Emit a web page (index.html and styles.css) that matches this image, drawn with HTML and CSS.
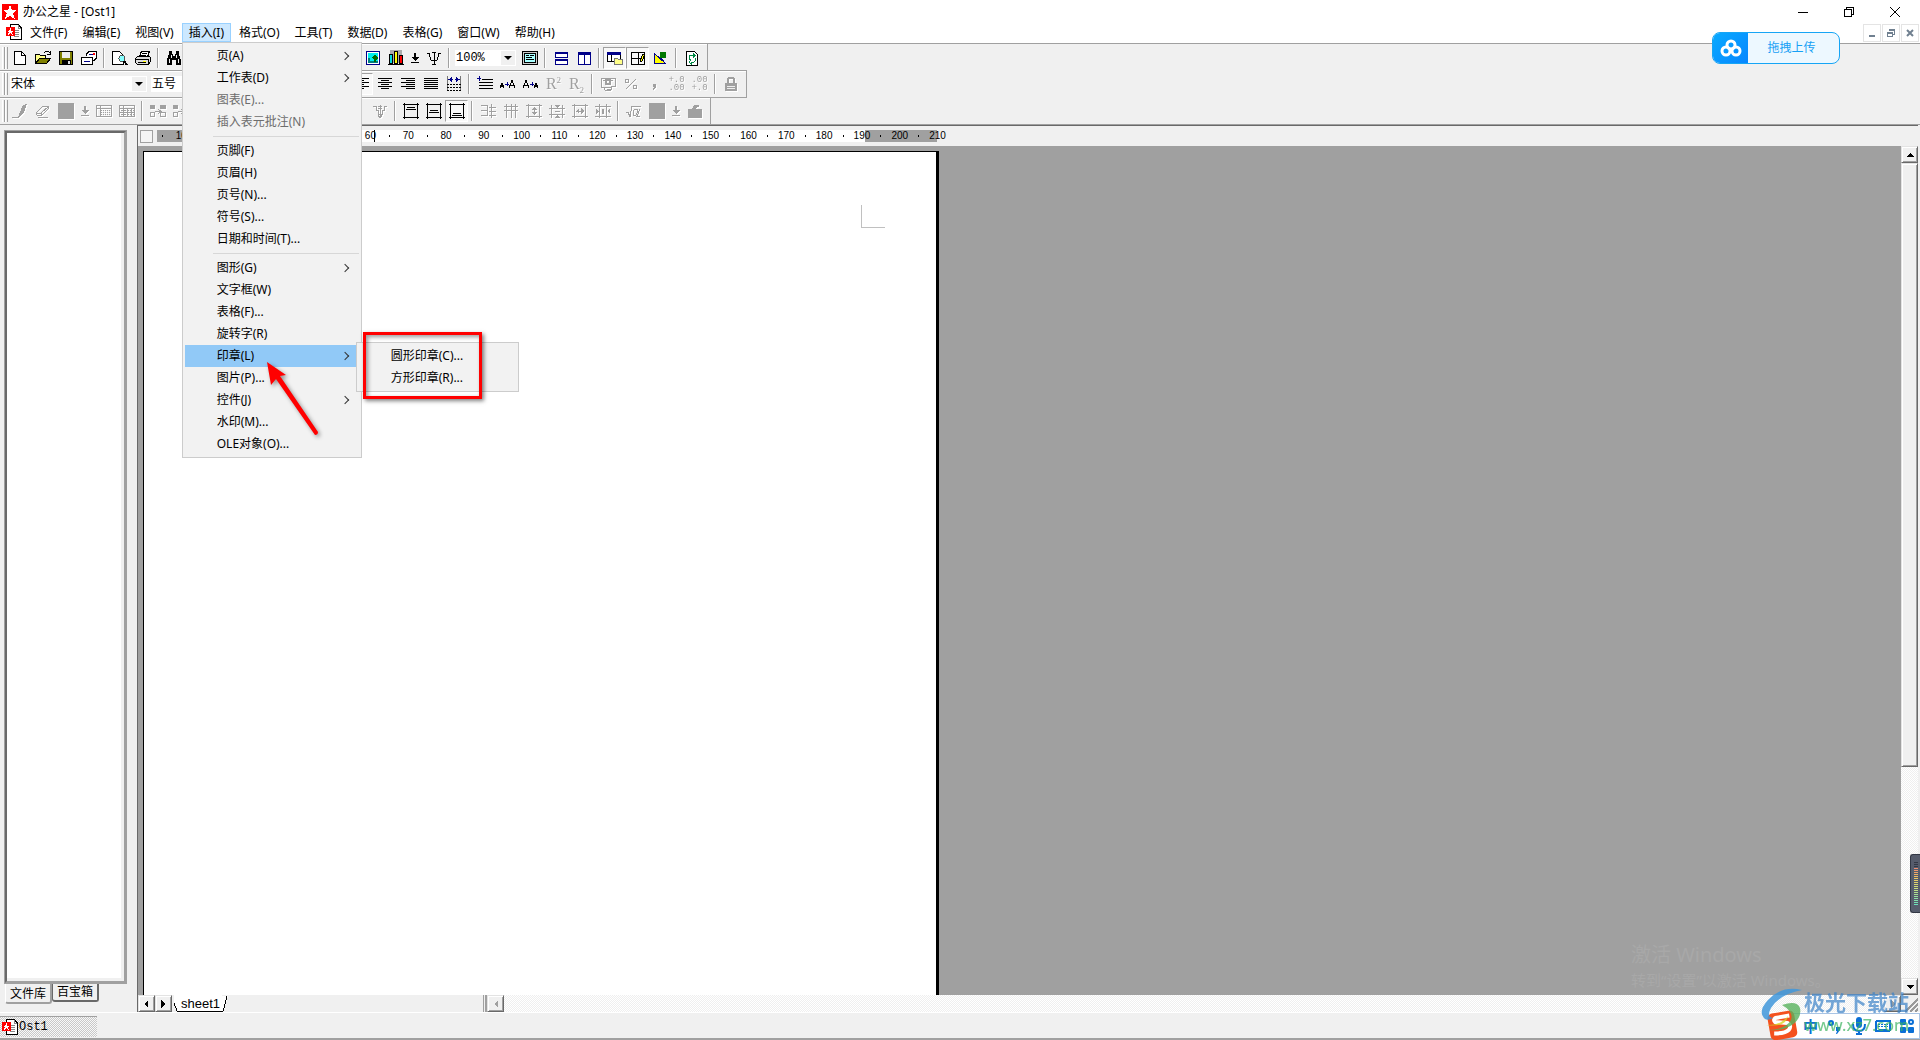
FILE: index.html
```html
<!DOCTYPE html>
<html lang="zh-CN">
<head>
<meta charset="utf-8">
<title>办公之星 - [Ost1]</title>
<link rel="stylesheet" href="styles.css">
</head>
<body>
<svg class="sprite" aria-hidden="true">
  <symbol id="star" viewBox="0 0 16 16"><rect width="16" height="16" rx="1" fill="#f00"/><path fill="#fff" d="M8 1l2 5h5l-4 3 2 6-5-3-5 3 2-6-4-3h5z"/></symbol>
  <symbol id="doc" viewBox="0 0 16 16"><path d="M4 .5h8l3 3v12H4z" fill="#fff" stroke="#000"/><path d="M12 1v3h3M8 6h5M8 8h5M8 10h5M8 12h5" stroke="#888" fill="none"/><rect y="3" width="9" height="9" fill="#f00"/><path fill="#fff" d="M4.500 4l1 2.500h3L6 8l1 3-2.500-2L2 11l1-3L.5 6.500h3z"/></symbol>
  <symbol id="new" viewBox="0 0 16 16"><path d="M2.500 1.500h7l4 4v9h-11z" fill="#fff" stroke="#000"/><path d="M9.500 1.500v4h4" fill="none" stroke="#000"/></symbol>
  <symbol id="open" viewBox="0 0 16 16"><path d="M.5 13.500v-9h4l1 1h5v3" fill="#ff8" stroke="#000"/><path d="M.5 13.500l4-5h11l-4 5z" fill="#808000" stroke="#000"/><path d="M9 3l2-2h2l2 2M15 1v3h-3" fill="none" stroke="#000"/></symbol>
  <symbol id="save" viewBox="0 0 16 16"><path d="M1.500 1.500h13v13h-13z" fill="#808000" stroke="#000"/><path d="M4 2h8v6H4z" fill="#eee"/><path d="M4 10h9v5H4z" fill="#000"/><path d="M10 11h2v3h-2z" fill="#ddd"/></symbol>
  <symbol id="mail" viewBox="0 0 16 16"><path d="M5.500 6V4l3-3h7v7l-3 3" fill="#fff" stroke="#000"/><path d="M.5 7.500h11v7H.5z" fill="#fff" stroke="#000"/><path d="M8 4h5M3 11h6" stroke="#008"/><path d="M12 3h2v2h-2z" fill="#f00"/></symbol>
  <symbol id="preview" viewBox="0 0 16 16"><path d="M.5 1.500h7l4 4v9H.5z" fill="#fff" stroke="#000"/><circle cx="10" cy="8.500" r="3" fill="#8ff" stroke="#555"/><path d="M12 11l3 4" stroke="#000" stroke-width="2"/></symbol>
  <symbol id="print" viewBox="0 0 16 16"><path d="M4.500 7l2-6h8l-2 6" fill="#fff" stroke="#000"/><path d="M7 3h5M6 5h5" stroke="#000"/><path d="M.5 8.500l2-2h12l1 1v4l-2 3h-11l-2-2z" fill="#ddd" stroke="#000"/><path d="M1 9.500h12v4M3 12h8" stroke="#000" fill="none"/><path d="M8 11h3v1H8z" fill="#ff0"/></symbol>
  <symbol id="find" viewBox="0 0 16 16"><path d="M3 1h3v3h1v2h2V4h1V1h3v3l2 6v5h-5v-5H6v5H1v-5l2-6z" fill="#000"/><path d="M3 9v4M12 9v4M5 5v3M10 5v3" stroke="#eee"/></symbol>
  <symbol id="picture" viewBox="0 0 16 16"><path d="M1.500 1.500h13v13h-13z" fill="#fff" stroke="#008"/><path d="M3 3h10v10H3z" fill="#0ee"/><path d="M3 8h2v3h8v2H3z" fill="#008080"/><path d="M10 4l3 4-2 2v2h-2v-2L7 8z" fill="#060"/></symbol>
  <symbol id="chart" viewBox="0 0 16 16"><path d="M2 0h12v13H2z" fill="#aaa"/><path d="M1.500 4.500h3v9h-3z" fill="#0dd" stroke="#000"/><path d="M6.500 1.500h3v12h-3z" fill="#ff0" stroke="#000"/><path d="M11.500 5.500h3v8h-3z" fill="#f00" stroke="#000"/><path d="M0 14.500h16" stroke="#000"/></symbol>
  <symbol id="drop" viewBox="0 0 8 16"><path d="M3 3h2v4h3L4 11 0 7h3zM0 12h8v1H0z" fill="currentColor"/></symbol>
  <symbol id="psi" viewBox="0 0 16 16"><path d="M2 3q2 0 2 4t4 4 4-4 2-4M8 2v13M6 14.500h4M6 2.500h4M1 3.500h2M13 3.500h2" fill="none" stroke="#000"/></symbol>
  <symbol id="screen" viewBox="0 0 16 16"><path d="M.5 1.500h15v13H.5z" fill="#ccc" stroke="#000"/><path d="M2.500 3.500h11v9h-11z" fill="#aff" stroke="#000"/><path d="M4 5.500h3M8 5.500h4M4 7.500h6M4 9.500h8" stroke="#000"/></symbol>
  <symbol id="splith" viewBox="0 0 16 16"><path d="M2.500 2.500h12v5h-12zM2.500 9.500h12v5h-12z" fill="#fff" stroke="#008"/><path d="M2 2h13v2H2zM2 9h13v2H2z" fill="#008"/></symbol>
  <symbol id="splitv" viewBox="0 0 16 16"><path d="M2.500 2.500h6v12h-6zM8.500 2.500h6v12h-6z" fill="#fff" stroke="#008"/><path d="M2 2h13v3H2z" fill="#008"/></symbol>
  <symbol id="panel" viewBox="0 0 16 16"><path d="M.5 2.500h13v9H.5z" fill="#fff" stroke="#000"/><path d="M0 2h14v3H0z" fill="#008"/><path d="M4 5v7" stroke="#000"/><path d="M7.500 14.500v-6h3l1 1h4v5z" fill="#ff8" stroke="#777"/></symbol>
  <symbol id="grid" viewBox="0 0 16 16"><path d="M1.500 2.500h13v12h-13zM8 2v13M1 8.500h13" fill="none" stroke="#000"/><path d="M10 11l3-7h2l-3 7-2 1z" fill="#ff0" stroke="#000"/></symbol>
  <symbol id="shapes" viewBox="0 0 16 16"><path d="M1.500 3.500v10h11z" fill="#ff0" stroke="#008"/><circle cx="10" cy="5" r="3.500" fill="#070"/><path d="M8 8l3 4" stroke="#008"/></symbol>
  <symbol id="refresh" viewBox="0 0 16 16"><path d="M2.500 1.500h8l3 3v11h-11z" fill="#fff" stroke="#000"/><path d="M6 5l-1 1v3h2M5 5.500h4v-2l2 2-2 2M11 8v3l-1 1H7v2l-2-2 2-2" stroke="#084" fill="none"/></symbol>
  <symbol id="left" viewBox="0 0 16 16"><path d="M1 2.500h14M1 4.500h9M1 6.500h14M1 8.500h9M1 10.500h14M1 12.500h9" stroke="#000"/></symbol>
  <symbol id="center" viewBox="0 0 16 16"><path d="M1 2.500h14M4 4.500h8M1 6.500h14M4 8.500h8M1 10.500h14M4 12.500h8" stroke="#000"/></symbol>
  <symbol id="right" viewBox="0 0 16 16"><path d="M1 2.500h14M6 4.500h9M1 6.500h14M6 8.500h9M1 10.500h14M6 12.500h9" stroke="#000"/></symbol>
  <symbol id="justify" viewBox="0 0 16 16"><path d="M1 2.500h14M1 4.500h14M1 6.500h14M1 8.500h14M1 10.500h14M1 12.500h14" stroke="#000"/></symbol>
  <symbol id="spread" viewBox="0 0 16 16"><path d="M1.500 0v15M14.500 0v15" stroke="#777"/><path d="M2 3.500h5M9 3.500h5" stroke="#008"/><path d="M3 3.500l3-3v6zM13 3.500l-3-3v6z" fill="#008"/><path d="M1 8.500h14M1 11.500h14M1 14.500h14" stroke="#000" stroke-dasharray="2 1"/></symbol>
  <symbol id="indent" viewBox="0 0 16 16"><path d="M0 2.500h4M2.500 0v5" stroke="#008"/><path d="M5 3.500h11M2 6.500h14M2 9.500h14M2 12.500h14" stroke="#000" stroke-width="1.500"/></symbol>
  <symbol id="grow" viewBox="0 0 16 16"><path d="M0 12l2-5 2 5M1 10.500h3M9 12l3-8 3 8M10 9.500h4" stroke="#000" fill="none"/><path d="M5 8l4 0M7 6v4" stroke="#008"/></symbol>
  <symbol id="shrink" viewBox="0 0 16 16"><path d="M0 12l3-8 3 8M1 9.500h4M11 12l2-5 2 5M11 10.500h4" stroke="#000" fill="none"/><path d="M7 8h4M9 6v4" stroke="#008"/></symbol>
  <symbol id="money" viewBox="0 0 16 16"><path d="M1 2h14v8h-3l-1 4H5l-1-3H1z" fill="none" stroke="currentColor"/><circle cx="8" cy="6" r="2.500" fill="none" stroke="currentColor" stroke-width="2"/><path d="M3 4h2M11 4h2M5 11h6M7 13h4" stroke="currentColor"/></symbol>
  <symbol id="percent" viewBox="0 0 16 16"><circle cx="4" cy="5" r="2" fill="none" stroke="currentColor"/><circle cx="12" cy="11" r="2" fill="none" stroke="currentColor"/><path d="M13 3L3 13" stroke="currentColor"/></symbol>
  <symbol id="comma" viewBox="0 0 16 16"><path d="M7 8h3v3l-2 3H7l1-3H7z" fill="currentColor"/></symbol>
  <symbol id="lock" viewBox="0 0 16 16"><path d="M2 7h12v8H2z" fill="currentColor"/><path d="M5 7V3l1-1h4l1 1v4" fill="none" stroke="currentColor" stroke-width="2"/><path d="M4 10h8M4 12h8" stroke="#eee"/></symbol>
  <symbol id="pen" viewBox="0 0 16 16"><path d="M0 14.500h6l2-2" stroke="currentColor" fill="none"/><path d="M7 11l4-9 4-1-3 9-4 3z" fill="currentColor"/></symbol>
  <symbol id="eraser" viewBox="0 0 16 16"><path d="M1 10l7-7h5l1 2-7 7H2zM1 10h5l7-6M6 10v2M3 14.500h10" fill="none" stroke="currentColor"/></symbol>
  <symbol id="block" viewBox="0 0 16 16"><path d="M0 0h16v16H0z" fill="currentColor"/></symbol>
  <symbol id="table" viewBox="0 0 16 16"><path d="M.5 2.500h15v11H.5zM.5 5.500h15M4.500 2.500v11" fill="none" stroke="currentColor"/><path d="M5 7.500h10M5 9.500h10M5 11.500h10" stroke="currentColor" stroke-dasharray="1 1"/></symbol>
  <symbol id="tabledots" viewBox="0 0 16 16"><path d="M.5 2.500h15v11H.5zM.5 5.500h15M4.500 2.500v11M8.500 6v7M12.500 6v7M1 9.500h15" fill="none" stroke="currentColor"/><path d="M2 7.500h13M2 11.500h13" stroke="currentColor" stroke-dasharray="2 1"/></symbol>
  <symbol id="merge" viewBox="0 0 16 16"><path d="M0 2h5v4H0zM10 2h6v4h-6z" fill="currentColor"/><path d="M5 8.500h5M8 6l3 2.500L8 11M.5 9.500h4v4h-4zM10.500 9.500h5v4h-5z" fill="none" stroke="currentColor"/></symbol>
  <symbol id="funnel" viewBox="0 0 16 16"><path d="M1 3h3v4h2v4h4V7h2V3h3M8 2v12M6 12l2 3 2-3M6 3h4M6 5h4" fill="none" stroke="currentColor"/></symbol>
  <symbol id="top" viewBox="0 0 16 16"><path d="M0 1.500h16M0 14.500h16M1.500 0v16M14.500 0v16M4 4.500h8M3 6.500h10" stroke="#000"/></symbol>
  <symbol id="mid" viewBox="0 0 16 16"><path d="M0 1.500h16M0 14.500h16M1.500 0v16M14.500 0v16M4 7.500h8M3 9.500h10" stroke="#000"/></symbol>
  <symbol id="bot" viewBox="0 0 16 16"><path d="M0 1.500h16M0 14.500h16M1.500 0v16M14.500 0v16M4 10.500h8M3 12.500h10" stroke="#000"/></symbol>
  <symbol id="rows" viewBox="0 0 16 16"><path d="M1 2.500h6M1 7.500h6M1 12.500h6M7 2v11M11.500 1v14M9 4.500h7M9 8.500h7M9 12.500h7" stroke="currentColor"/></symbol>
  <symbol id="cols" viewBox="0 0 16 16"><path d="M1 3.500h14M1 7.500h14M3.500 1v14M8.500 1v14M12.500 1v14" stroke="currentColor"/></symbol>
  <symbol id="fitv" viewBox="0 0 16 16"><path d="M0 2.500h16M0 13.500h16M2.500 1v14M13.500 1v14M8 5v6" stroke="currentColor"/><path d="M5 7l3-3 3 3zM5 9l3 3 3-3z" fill="currentColor"/></symbol>
  <symbol id="fitout" viewBox="0 0 16 16"><path d="M0 5.500h16M0 11.500h16M2.500 2v13M13.500 2v13" stroke="currentColor"/><path d="M6 2h5L8 5zM6 15h5l-3-3zM6 8h5v1H6z" fill="currentColor"/></symbol>
  <symbol id="fith" viewBox="0 0 16 16"><path d="M0 2.500h16M0 13.500h16M2.500 1v14M13.500 1v14M4 8h8" stroke="currentColor"/><path d="M7 5v6L4 8zM9 5v6l3-3z" fill="currentColor"/></symbol>
  <symbol id="fitin" viewBox="0 0 16 16"><path d="M0 3.500h16M0 13.500h16M4.500 1v14M11.500 1v14" stroke="currentColor"/><path d="M1 6v5l3-3zM15 6v5l-3-3zM7 6h2v5H7z" fill="currentColor"/></symbol>
  <symbol id="root" viewBox="0 0 16 16"><path d="M0 9h2l2 5 2-11h9M14 6l-3 7h3M12 6H9q-2 1-2 4t2 3q2 0 3-7" fill="none" stroke="currentColor"/></symbol>
  <symbol id="folder" viewBox="0 0 16 16"><path d="M0 6h5l2-4h4l1-1v3h-2l-2 2h7v9H1V7z" fill="currentColor"/></symbol>
</svg>

<header class="titlebar">
  <svg class="app-icon"><use href="#star"/></svg>
  <h1 class="title">办公之星 - [Ost1]</h1>
  <div class="window-controls">
    <button aria-label="最小化"><svg width="12" height="12"><path d="M1 6.500h10" stroke="#000"/></svg></button>
    <button aria-label="还原"><svg width="12" height="12"><path d="M1.500 3.500h7v7h-7zM3.500 3V1.500h7v7H9" fill="none" stroke="#000"/></svg></button>
    <button aria-label="关闭"><svg class="smooth" width="12" height="12"><path d="M1 1l10 10M11 1L1 11" stroke="#000"/></svg></button>
  </div>
</header>

<nav class="menubar">
  <svg class="doc-icon"><use href="#doc"/></svg>
  <button>文件(F)</button>
  <button>编辑(E)</button>
  <button>视图(V)</button>
  <div class="menu-host">
    <button class="open">插入(I)</button>
    <div class="dropdown">
      <button class="sub">页(A)</button>
      <button class="sub">工作表(D)</button>
      <button disabled>图表(E)...</button>
      <button disabled>插入表元批注(N)</button>
      <hr>
      <button>页脚(F)</button>
      <button>页眉(H)</button>
      <button>页号(N)...</button>
      <button>符号(S)...</button>
      <button>日期和时间(T)...</button>
      <hr>
      <button class="sub">图形(G)</button>
      <button>文字框(W)</button>
      <button>表格(F)...</button>
      <button>旋转字(R)</button>
      <div class="menu-host">
        <button class="sub active">印章(L)</button>
        <div class="submenu">
          <button>圆形印章(C)...</button>
          <button>方形印章(R)...</button>
          <div class="highlight-box"></div>
        </div>
        <svg class="pointer" viewBox="0 0 60 84"><path d="M8 6l19 13-6 1 38 56q0 3-3 3L17 23l-5 6z" fill="#f00"/></svg>
      </div>
      <button>图片(P)...</button>
      <button class="sub">控件(J)</button>
      <button>水印(M)...</button>
      <button>OLE对象(O)...</button>
    </div>
  </div>
  <button>格式(O)</button>
  <button>工具(T)</button>
  <button>数据(D)</button>
  <button>表格(G)</button>
  <button>窗口(W)</button>
  <button>帮助(H)</button>
  <div class="mdi-controls">
    <button aria-label="最小化文档"><svg width="10" height="10"><path d="M2 7h6v2H2z" fill="#708090"/></svg></button>
    <button aria-label="还原文档"><svg width="10" height="10"><path d="M1.500 4.500h5v4h-5zM3.500 3V1.500h5v5H7M1 5h6M3 2h6" fill="none" stroke="#708090"/></svg></button>
    <button aria-label="关闭文档"><svg class="smooth" width="10" height="10"><path d="M2 2l6 6M8 2L2 8" stroke="#708090" stroke-width="2"/></svg></button>
  </div>
</nav>

<div class="toolbars">
  <div class="toolbar first">
    <span class="grip"></span>
    <button aria-label="新建"><svg><use href="#new"/></svg></button>
    <button aria-label="打开"><svg><use href="#open"/></svg></button>
    <button aria-label="保存"><svg><use href="#save"/></svg></button>
    <button aria-label="发送"><svg><use href="#mail"/></svg></button>
    <span class="sep"></span>
    <button aria-label="预览"><svg><use href="#preview"/></svg></button>
    <button aria-label="打印"><svg><use href="#print"/></svg></button>
    <span class="sep"></span>
    <button aria-label="查找"><svg><use href="#find"/></svg></button>
    <span class="space wide"></span>
    <button aria-label="图片"><svg><use href="#picture"/></svg></button>
    <button aria-label="图表"><svg><use href="#chart"/></svg></button>
    <button class="narrow" aria-label="图表类型"><svg><use href="#drop"/></svg></button>
    <button aria-label="符号"><svg><use href="#psi"/></svg></button>
    <span class="sep"></span>
    <label class="combo small"><select class="mono" aria-label="显示比例"><option>100%</option></select><span class="arrow"></span></label>
    <button aria-label="全屏"><svg><use href="#screen"/></svg></button>
    <span class="sep"></span>
    <button aria-label="横向平铺"><svg><use href="#splith"/></svg></button>
    <button aria-label="纵向平铺"><svg><use href="#splitv"/></svg></button>
    <span class="sep"></span>
    <button class="pressed" aria-label="文件库"><svg><use href="#panel"/></svg></button>
    <button class="pressed" aria-label="表格线"><svg><use href="#grid"/></svg></button>
    <button aria-label="图形"><svg><use href="#shapes"/></svg></button>
    <span class="sep"></span>
    <button aria-label="刷新"><svg><use href="#refresh"/></svg></button>
  </div>
  <div class="toolbar middle">
    <span class="grip"></span>
    <label class="combo large"><select aria-label="字体"><option>宋体</option></select><span class="arrow"></span></label>
    <label class="combo small"><select aria-label="字号"><option>五号</option></select><span class="arrow"></span></label>
    <span class="space"></span>
    <button class="pressed" aria-label="左对齐"><svg><use href="#left"/></svg></button>
    <button aria-label="居中"><svg><use href="#center"/></svg></button>
    <button aria-label="右对齐"><svg><use href="#right"/></svg></button>
    <button aria-label="两端对齐"><svg><use href="#justify"/></svg></button>
    <button aria-label="分散对齐"><svg><use href="#spread"/></svg></button>
    <span class="sep"></span>
    <button aria-label="缩进"><svg><use href="#indent"/></svg></button>
    <button aria-label="增大字号"><svg><use href="#grow"/></svg></button>
    <button aria-label="减小字号"><svg><use href="#shrink"/></svg></button>
    <button disabled class="script">R<sup>2</sup></button>
    <button disabled class="script">R<sub>2</sub></button>
    <span class="sep"></span>
    <button disabled aria-label="货币"><svg><use href="#money"/></svg></button>
    <button disabled aria-label="百分比"><svg><use href="#percent"/></svg></button>
    <button disabled aria-label="千位分隔"><svg><use href="#comma"/></svg></button>
    <button disabled class="decimal">+.0<br>.00</button>
    <button disabled class="decimal">.00<br>+.0</button>
    <span class="sep"></span>
    <button disabled aria-label="锁定"><svg><use href="#lock"/></svg></button>
  </div>
  <div class="toolbar">
    <span class="grip"></span>
    <button disabled aria-label="画笔"><svg><use href="#pen"/></svg></button>
    <button disabled aria-label="橡皮"><svg><use href="#eraser"/></svg></button>
    <button disabled aria-label="颜色"><svg><use href="#block"/></svg></button>
    <button disabled class="narrow" aria-label="选择颜色"><svg><use href="#drop"/></svg></button>
    <button disabled aria-label="表格"><svg><use href="#table"/></svg></button>
    <button disabled aria-label="单元格"><svg><use href="#tabledots"/></svg></button>
    <span class="sep"></span>
    <button disabled aria-label="合并"><svg><use href="#merge"/></svg></button>
    <button disabled aria-label="拆分"><svg><use href="#merge"/></svg></button>
    <span class="space wide"></span>
    <button disabled aria-label="筛选"><svg><use href="#funnel"/></svg></button>
    <span class="sep"></span>
    <button aria-label="顶端对齐"><svg><use href="#top"/></svg></button>
    <button aria-label="垂直居中"><svg><use href="#mid"/></svg></button>
    <button class="pressed" aria-label="底端对齐"><svg><use href="#bot"/></svg></button>
    <span class="sep"></span>
    <button disabled aria-label="平均行"><svg><use href="#rows"/></svg></button>
    <button disabled aria-label="平均列"><svg><use href="#cols"/></svg></button>
    <button disabled aria-label="增高"><svg><use href="#fitv"/></svg></button>
    <button disabled aria-label="减高"><svg><use href="#fitout"/></svg></button>
    <button disabled aria-label="增宽"><svg><use href="#fith"/></svg></button>
    <button disabled aria-label="减宽"><svg><use href="#fitin"/></svg></button>
    <span class="sep"></span>
    <button disabled aria-label="公式"><svg><use href="#root"/></svg></button>
    <button disabled aria-label="底色"><svg><use href="#block"/></svg></button>
    <button disabled class="narrow" aria-label="选择底色"><svg><use href="#drop"/></svg></button>
    <button disabled aria-label="文件夹"><svg><use href="#folder"/></svg></button>
  </div>
</div>

<main class="workspace">
  <aside class="library">
    <div class="library-list"></div>
    <div class="library-tabs">
      <button class="current">文件库</button>
      <button>百宝箱</button>
    </div>
  </aside>
  <section class="document">
    <div class="ruler">
      <span class="ruler-corner"></span>
      <div class="ruler-scale">
        <i></i><b>10</b><i></i><b>20</b><i></i><b>30</b><i></i><b>40</b><i></i><b>50</b><i></i><b class="mark">60</b><i></i><b>70</b><i></i><b>80</b><i></i><b>90</b><i></i><b>100</b><i></i><b>110</b><i></i><b>120</b><i></i><b>130</b><i></i><b>140</b><i></i><b>150</b><i></i><b>160</b><i></i><b>170</b><i></i><b>180</b><i></i><b>190</b><i></i><b>200</b><i></i><b>210</b>
      </div>
    </div>
    <div class="view">
      <div class="canvas">
        <div class="page"><span class="crop-mark"></span></div>
        <div class="activation"><p class="activation-title">激活 Windows</p><p>转到“设置”以激活 Windows。</p></div>
      </div>
      <div class="vscroll">
        <button class="scroll-button" aria-label="向上"><svg width="8" height="4"><path d="M4 0l4 4H0z"/></svg></button>
        <span class="thumb"></span>
        <span class="track"></span>
        <button class="scroll-button" aria-label="向下"><svg width="8" height="4"><path d="M0 0h8L4 4z"/></svg></button>
      </div>
    </div>
    <div class="sheetbar">
      <button class="scroll-button" aria-label="上一页"><svg width="5" height="8"><path d="M4 0v8L0 4z"/></svg></button>
      <button class="scroll-button" aria-label="下一页"><svg width="5" height="8"><path d="M0 0v8l4-4z"/></svg></button>
      <div class="sheets"><svg width="5" height="17"><path d="M0 6l3 10h2V0H0z" fill="#fff"/><path d="M0 8l3 8h2" fill="none" stroke="#000"/></svg><button class="sheet">sheet1</button><svg width="7" height="17"><path d="M0 16h2L6 1H0z" fill="#fff"/><path d="M0 16.500h1L5 1" fill="none" stroke="#000"/></svg></div>
      <span class="splitter"></span>
      <button class="scroll-button" disabled aria-label="向左"><svg width="4" height="8"><path d="M4 0v8L0 4z"/></svg></button>
      <span class="track"></span>
      <button class="scroll-button" disabled aria-label="向右"><svg width="4" height="8"><path d="M0 0v8l4-4z"/></svg></button>
      <svg class="size-grip" viewBox="0 0 17 17"><path d="M4 17L17 4M9 17l8-8M14 17l3-3" stroke="#999" stroke-width="2"/></svg>
    </div>
  </section>
</main>

<footer class="statusbar">
  <button class="task"><svg class="doc-icon"><use href="#doc"/></svg>Ost1</button>
</footer>

<button class="upload">
  <span class="upload-logo"><svg class="smooth" width="22" height="20" viewBox="0 0 22 20" fill="none" stroke="#fff" stroke-width="3"><circle cx="11" cy="7" r="4"/><circle cx="6" cy="13" r="4"/><circle cx="16" cy="13" r="4"/></svg></span>
  <span class="upload-text">拖拽上传</span>
</button>

<div class="meter"><span></span></div>

<div class="ime">
  <span>中</span>
  <svg class="smooth" width="16" height="16" fill="#0a6fd6"><circle cx="4" cy="5" r="2" fill="none" stroke="#0a6fd6" stroke-width="2"/><path d="M9 9h4v3l-3 4H9l1-3H9z"/></svg>
  <svg class="smooth" width="14" height="18"><rect x="4" width="6" height="11" rx="3" fill="#0a6fd6"/><path d="M1 7q0 7 6 7t6-7M7 14v4M4 17h6" fill="none" stroke="#0a6fd6" stroke-width="2"/></svg>
  <svg width="16" height="12"><rect x="1" y="1" width="14" height="10" rx="1" fill="#fff" stroke="#0a6fd6" stroke-width="2"/><path d="M3 4h10M3 6h10" stroke="#0a6fd6" stroke-dasharray="2 1"/><path d="M4 9h8" stroke="#0a6fd6"/></svg>
  <svg class="smooth" width="14" height="14" fill="#0a6fd6"><rect width="6" height="6" rx="1"/><circle cx="11" cy="3" r="2" fill="none" stroke="#0a6fd6" stroke-width="2"/><rect y="8" width="6" height="6" rx="1"/><rect x="8" y="8" width="6" height="6" rx="1"/></svg>
</div>
<div class="watermark">
  <svg class="smooth" width="44" height="52" viewBox="0 0 44 52">
    <g transform="rotate(-10 22 38)"><rect x="9" y="24" width="27" height="27" rx="5" fill="#f4511e"/><path d="M31 29H17q-3 1-1 4l12 3q4 3 0 7-4 3-15 1" fill="none" stroke="#fff" stroke-width="4"/></g>
    <path d="M42 2Q22-3 8 12-3 24 5 31q3 2 8-1-7-1-2-10Q20 6 42 2z" fill="#3f97da" opacity=".85"/>
    <path d="M22 17q15-5 18 3 2 10-8 17-9 6-23 5 17-1 22-10 3-8-9-15z" fill="#58b25c" opacity=".8"/>
    <path d="M6 37q14 1 22-9-2 12-22 9z" fill="#d8d429" opacity=".8"/>
  </svg>
  <div class="watermark-text"><p class="watermark-name">极光下载站</p><p class="watermark-url">www.xz7.com</p></div>
</div>
</body>
</html>
```

FILE: styles.css
```css
* { box-sizing: border-box; }

body {
  margin: 0;
  min-height: 100vh;
  display: flex;
  flex-direction: column;
  background: #f0f0f0;
  color: #000;
  font: 12px/18px "Noto Sans", "Noto Sans CJK SC", sans-serif;
  overflow: hidden;
}

button, select {
  margin: 0;
  padding: 0;
  border: 0;
  border-radius: 0;
  background: none;
  color: inherit;
  font: inherit;
}

p, h1 { margin: 0; }
svg { shape-rendering: crispEdges; flex: none; }
.smooth { shape-rendering: auto; }
.sprite { position: absolute; width: 0; height: 0; }

/* Title and menus */
.titlebar {
  display: flex;
  align-items: center;
  height: 23px;
  padding: 0 2px;
  gap: 5px;
  background: #fff;
}
.app-icon { width: 16px; height: 16px; }
.title { flex: 1; font-size: 12px; font-weight: 400; }
.window-controls { display: flex; }
.window-controls button { display: grid; place-items: center; width: 46px; height: 20px; }

.menubar {
  display: flex;
  gap: 1px;
  height: 21px;
  background: #fff;
  border-bottom: 1px solid #a0a0a0;
}
.menubar > button, .menu-host > .open { height: 19px; padding: 0 7px; line-height: 19px; }
.doc-icon { width: 16px; height: 16px; }
.menubar > .doc-icon { margin: 1px 0 0 6px; }
.menu-host { position: relative; }
.menu-host > .open { background: #cce8ff; outline: 1px solid #99d1ff; outline-offset: -1px; }
.mdi-controls { display: flex; gap: 1px; margin-left: auto; padding: 1px 1px 0 0; }
.mdi-controls button { display: grid; place-items: center; width: 18px; height: 18px; border: 1px solid #e4e4e4; }

.dropdown, .submenu {
  position: absolute;
  z-index: 10;
  background: #f2f2f2;
  border: 1px solid #ccc;
  padding: 2px;
}
.dropdown { top: 19px; left: 0; width: 180px; }
.dropdown button {
  display: flex;
  align-items: center;
  width: 100%;
  height: 22px;
  padding-left: 32px;
  white-space: nowrap;
}
.dropdown button:disabled { color: #6d6d6d; }
.dropdown .active { background: #91c9f7; }
.dropdown hr { height: 1px; margin: 3px 0 3px 28px; border: 0; background: #d7d7d7; }
.sub::after {
  content: "";
  width: 5px;
  height: 5px;
  margin: 0 11px 0 auto;
  border: solid #333;
  border-width: 1px 1px 0 0;
  transform: rotate(45deg);
}
.submenu { top: -3px; left: 171px; width: 163px; z-index: 11; }
.highlight-box {
  position: absolute;
  inset: -11px 36px -8px 6px;
  border: 3px solid #f00;
  box-shadow: 2px 2px 4px rgba(0, 0, 0, .5), inset 2px 2px 4px rgba(0, 0, 0, .4);
}
.pointer {
  position: absolute;
  z-index: 12;
  top: 11px;
  left: 74px;
  width: 60px;
  height: 84px;
  shape-rendering: auto;
  filter: drop-shadow(2px 2px 2px rgba(0, 0, 0, .4));
}

/* Toolbars */
.toolbars { display: flex; flex-direction: column; align-items: flex-start; }
.toolbar {
  display: flex;
  align-items: center;
  height: 26px;
  padding: 0 4px 0 2px;
  border-right: 1px solid #a0a0a0;
  box-shadow: inset 0 1px #fff;
}
.toolbar.first { padding-top: 2px; }
.toolbar.middle { height: 28px; border-top: 1px solid #a0a0a0; border-bottom: 1px solid #a0a0a0; }
.toolbar button { display: grid; place-items: center; width: 23px; height: 22px; }
.toolbar button.narrow { width: 15px; }
.toolbar svg { width: 16px; height: 16px; }
.toolbar .narrow svg { width: 8px; }
.toolbar button:disabled { color: #a0a0a0; filter: drop-shadow(1px 1px 0 #fff); }
.toolbar .pressed { background: #f8f8f8; border: 1px solid; border-color: #a0a0a0 #fff #fff #a0a0a0; }
.grip { width: 6px; height: 22px; background: linear-gradient(90deg, #fff 1px, #f0f0f0 1px 2px, #a0a0a0 2px 3px, #fff 3px 4px, #f0f0f0 4px 5px, #a0a0a0 5px); }
.sep { width: 8px; height: 20px; background: linear-gradient(90deg, transparent 3px, #a0a0a0 3px 4px, #fff 4px 5px, transparent 5px); }
.space { width: 136px; }
.space.wide { width: 176px; }
.combo { display: flex; height: 16px; margin: 0 2px; background: #fff; }
.combo.small { width: 61px; }
.combo.large { width: 137px; }
.combo select { flex: 1; min-width: 0; padding-left: 1px; appearance: none; line-height: 16px; outline: 0; }
.mono { font-family: "Liberation Mono", monospace; }
.arrow { width: 14px; margin: 1px; background: #f0f0f0; display: grid; place-items: center; }
.arrow::after { content: ""; border: solid transparent; border-width: 4px 4px 0; border-top-color: #000; }
.toolbar .script { display: block; font: 16px/20px "Liberation Serif", serif; }
.script sup, .script sub { font-size: 9px; line-height: 0; }
.toolbar .decimal { font: 9px/8px "Liberation Mono", monospace; }

/* Workspace */
.workspace { flex: 1; display: flex; border-top: 1px solid #a0a0a0; }
.library { display: flex; flex-direction: column; width: 137px; padding: 6px 11px 7px 5px; }
.library-list {
  flex: 1;
  background: #fff;
  border: 2px solid;
  border-color: #696969 #a0a0a0 #a0a0a0 #696969;
  box-shadow: inset -3px -3px #f0f0f0;
  outline: 1px solid #a0a0a0;
}
.library-tabs { display: flex; align-items: flex-start; height: 22px; padding-top: 1px; }
.library-tabs button {
  height: 18px;
  padding: 0 4px;
  border: solid #696969;
  border-width: 0 2px 2px 1px;
  border-radius: 0 0 3px 3px;
  line-height: 16px;
}
.library-tabs .current { height: 20px; line-height: 20px; border-color: #fff #a0a0a0 #a0a0a0 #fff; }

.document { flex: 1; display: flex; flex-direction: column; min-width: 0; border: solid #696969; border-width: 1px 0 0 1px; margin-right: 2px; }
.ruler { display: flex; height: 20px; padding: 4px 0 0 2px; background: #f0f0f0; }
.ruler-corner { width: 13px; height: 13px; background: #f4f4f4; border: 1px solid #a0a0a0; }
.ruler-scale {
  display: grid;
  grid-template-columns: repeat(42, 1fr);
  width: 794px;
  height: 12px;
  background: linear-gradient(90deg, transparent 4px, #a0a0a0 4px 100px, #fff 100px 712px, #a0a0a0 712px 784px, transparent 784px);
}
.ruler-scale b { display: flex; justify-content: center; min-width: 0; font: 10px/12px "Liberation Sans", sans-serif; }
.ruler-scale i { width: 1px; height: 2px; margin: 5px auto; background: #000; }
.ruler-scale .mark { background: linear-gradient(#000, #000) 13px 0 / 1px 100% no-repeat; }

.view { flex: 1; display: flex; }
.canvas { position: relative; flex: 1; padding: 5px 0 0 5px; background: #a0a0a0; display: flex; }
.page {
  width: 796px;
  padding: 53px 51px 0 0;
  background: #fff;
  border: solid #000;
  border-width: 1px 3px 0 1px;
}
.crop-mark { display: block; width: 24px; height: 23px; margin-left: auto; border: solid #c0c0c0; border-width: 0 0 1px 1px; }
.activation { position: absolute; right: 38px; bottom: 4px; width: 232px; color: #a8a8a8; font-size: 15px; line-height: 22px; white-space: nowrap; }
.activation-title { font-size: 20px; line-height: 28px; }

.vscroll { display: flex; flex-direction: column; width: 17px; }
.scroll-button, .thumb {
  display: grid;
  place-items: center;
  width: 17px;
  height: 17px;
  flex: none;
  background: #f0f0f0;
  border: 1px solid;
  border-color: #e3e3e3 #696969 #696969 #e3e3e3;
  box-shadow: inset 1px 1px #fff, inset -1px -1px #a0a0a0;
}
.scroll-button:disabled { fill: #a0a0a0; }
.thumb { height: auto; flex: 603; }
.track { flex: 212; background: repeating-conic-gradient(#fff 0 25%, #efefef 0 50%) 0 0 / 2px 2px; }

.sheetbar { display: flex; height: 17px; }
.sheets { display: flex; width: 311px; padding-left: 2px; }
.sheet { padding: 0 2px; background: #fff; border-bottom: 1px solid #000; font: 13px/18px "Liberation Sans", sans-serif; }
.splitter { width: 4px; border: solid #a0a0a0; border-width: 0 2px 0 1px; }
.size-grip { width: 17px; height: 17px; }

.statusbar { height: 28px; padding-top: 3px; border-top: 1px solid #fff; border-bottom: 2px solid #a0a0a0; }
.task {
  display: flex;
  align-items: center;
  gap: 1px;
  width: 97px;
  height: 21px;
  padding-left: 2px;
  border-top: 1px solid #a0a0a0;
  background: repeating-conic-gradient(#f8f8f8 0 25%, #c8c8c8 0 50%) 0 0 / 2px 2px;
  font: 12px/18px "Liberation Mono", monospace;
}

/* Floating desktop widgets */
.upload {
  position: absolute;
  top: 32px;
  right: 80px;
  display: flex;
  width: 128px;
  height: 32px;
  border: 1px solid #16a5f5;
  border-radius: 8px;
  background: #edf8ff;
  color: #16a0f5;
  overflow: hidden;
}
.upload-logo { display: grid; place-items: center; width: 35px; height: 30px; background: linear-gradient(135deg, #09aaff, #0786ff); }
.upload-text { flex: 1; line-height: 30px; padding-right: 4px; }
.meter {
  position: absolute;
  right: 0;
  bottom: 127px;
  width: 10px;
  height: 59px;
  padding: 7px 2px 6px 3px;
  border: 1px solid #333845;
  border-right: 0;
  border-radius: 3px 0 0 3px;
  background: #565c6c;
}
.meter span {
  display: block;
  height: 100%;
  background: repeating-linear-gradient(transparent 0 1px, #565c6c 1px 2px), linear-gradient(#333845 5px, #f08a70 6px, #f0c860 16px, #c8e080 27px, #60e0c0);
}
.ime {
  position: absolute;
  right: 0;
  bottom: 1px;
  display: flex;
  align-items: center;
  gap: 9px;
  width: 136px;
  height: 26px;
  padding-left: 18px;
  border: 1px solid #a9c4e4;
  background: #fff;
  color: #0a6fd6;
  font-size: 15px;
  font-weight: 700;
}
.watermark { position: absolute; right: 9px; bottom: 0; display: flex; }
.watermark-text { width: 107px; opacity: .7; }
.watermark-name { color: #3b82c8; font-size: 21px; font-weight: 700; line-height: 28px; white-space: nowrap; }
.watermark-url { color: #3cb460; font-size: 16px; font-weight: 500; line-height: 18px; }
```
